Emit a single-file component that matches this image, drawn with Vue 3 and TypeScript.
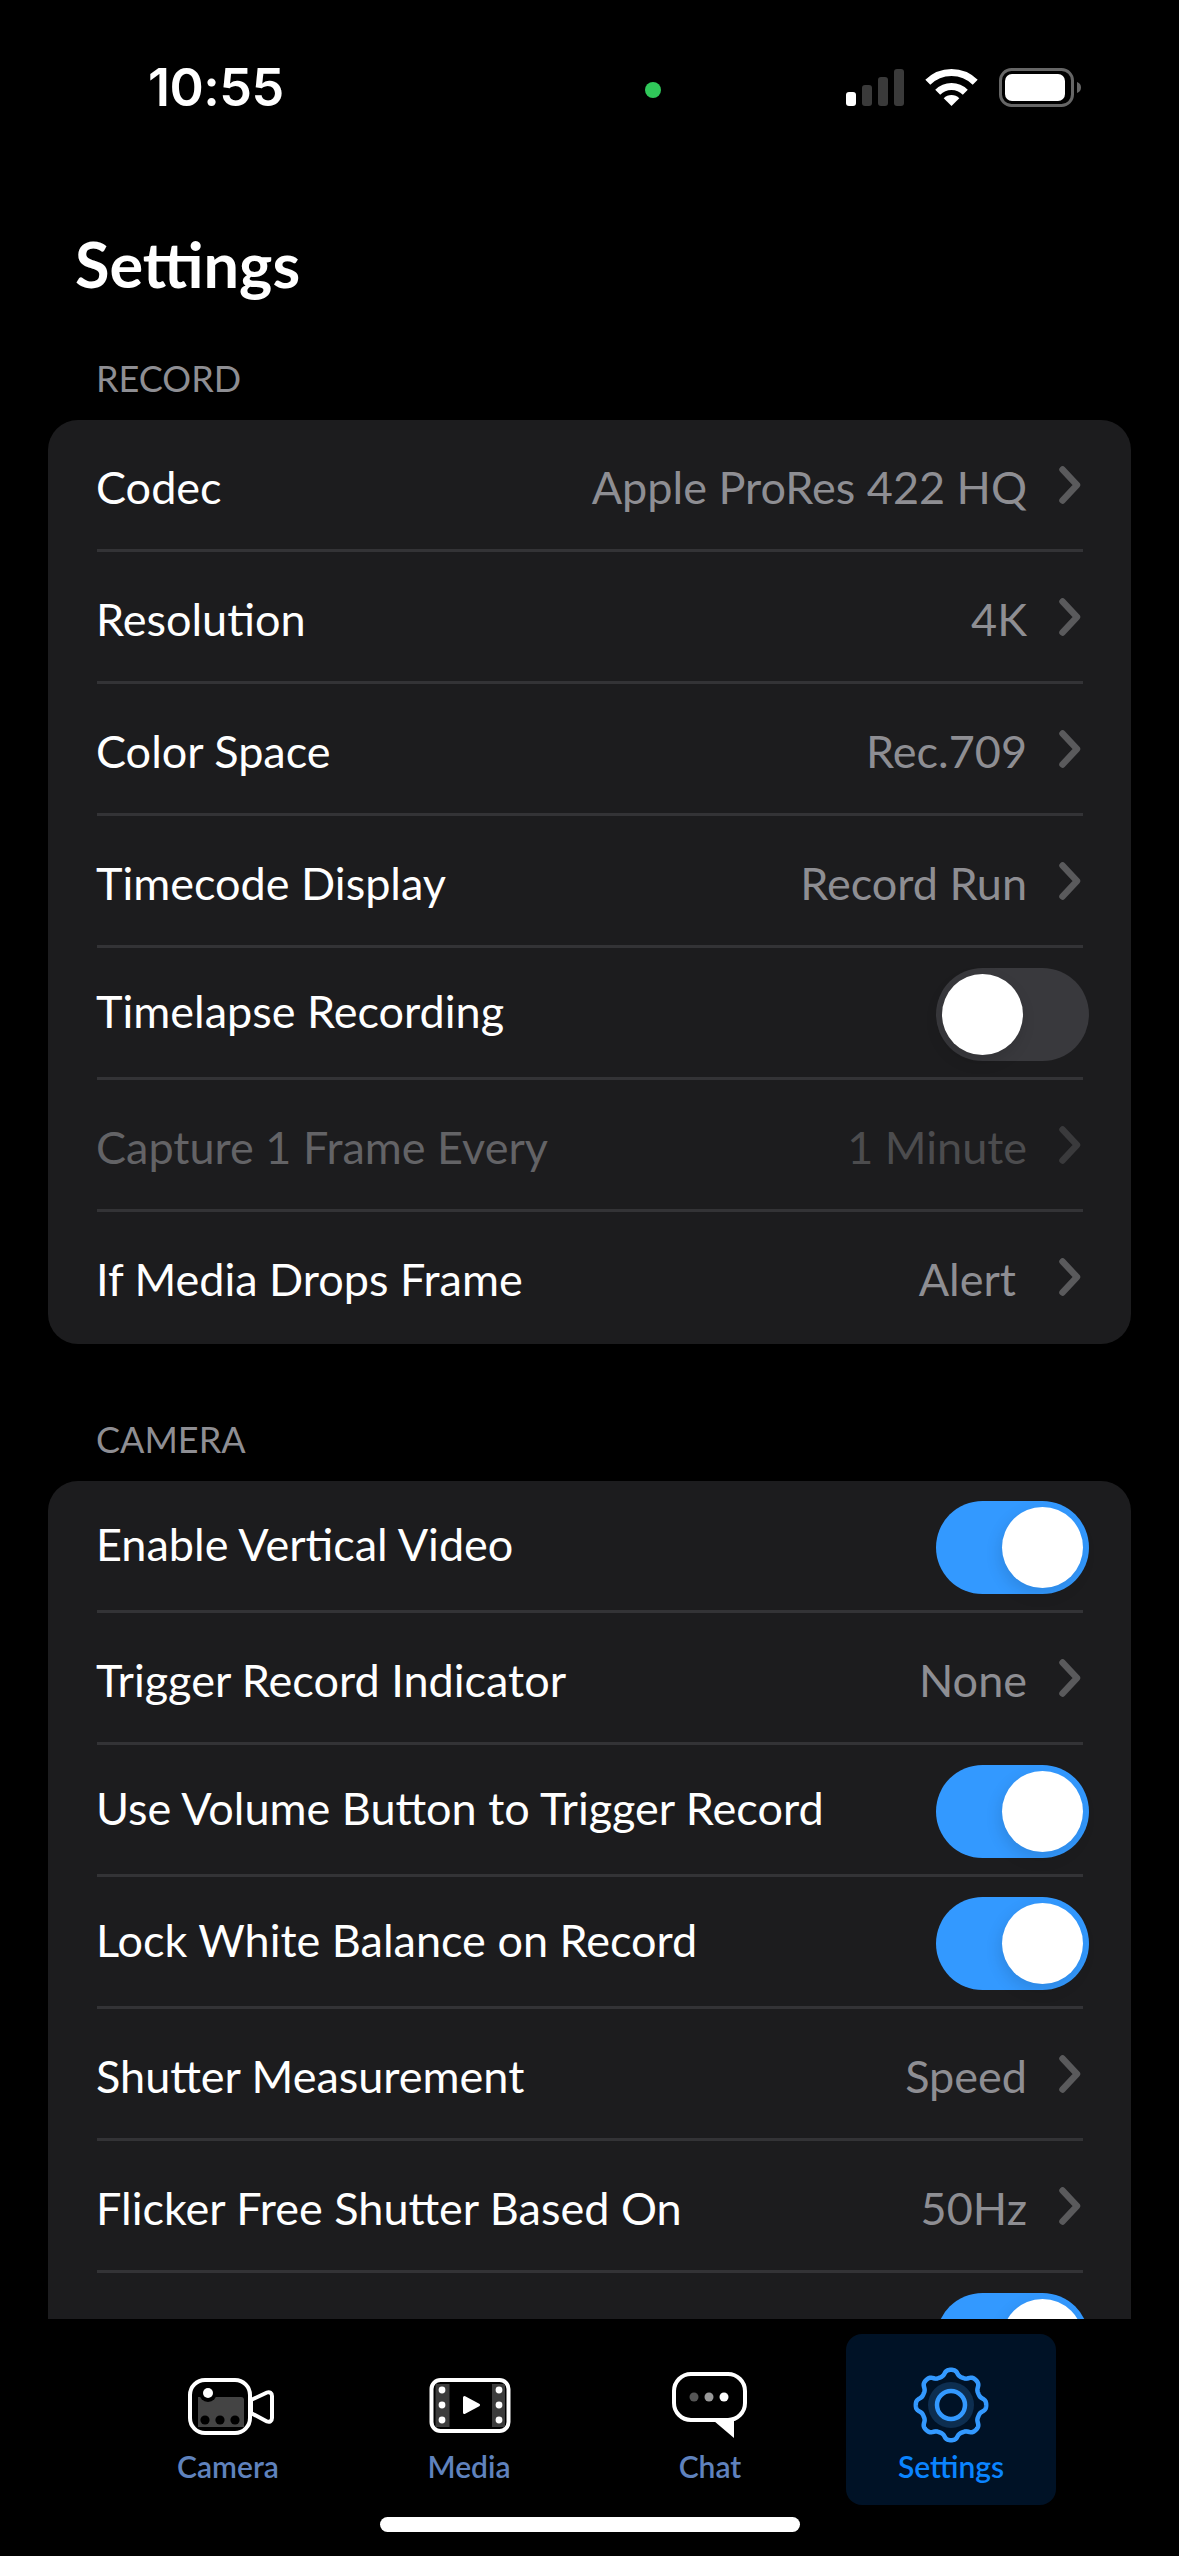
<script setup lang="ts">
interface Row {
  label: string;
  value?: string;
  toggle?: boolean;
  dim?: boolean;
  inset?: boolean;
}

const recordRows: Row[] = [
  { label: 'Codec', value: 'Apple ProRes 422 HQ' },
  { label: 'Resolution', value: '4K' },
  { label: 'Color Space', value: 'Rec.709' },
  { label: 'Timecode Display', value: 'Record Run' },
  { label: 'Timelapse Recording', toggle: false },
  { label: 'Capture 1 Frame Every', value: '1 Minute', dim: true },
  { label: 'If Media Drops Frame', value: 'Alert', inset: true },
];

const cameraRows: Row[] = [
  { label: 'Enable Vertical Video', toggle: true },
  { label: 'Trigger Record Indicator', value: 'None' },
  { label: 'Use Volume Button to Trigger Record', toggle: true },
  { label: 'Lock White Balance on Record', toggle: true },
  { label: 'Shutter Measurement', value: 'Speed' },
  { label: 'Flicker Free Shutter Based On', value: '50Hz' },
  { label: '', toggle: true },
];

const sections = [
  { title: 'RECORD', rows: recordRows },
  { title: 'CAMERA', rows: cameraRows },
];

// gear outline, 8 soft teeth
const gearPath = (() => {
  const pts: string[] = [];
  for (let i = 0; i < 240; i++) {
    const a = (i / 240) * Math.PI * 2;
    const r = 32.4 + 2.8 * (Math.tanh(1.5 * Math.cos(8 * a)) / Math.tanh(1.5));
    pts.push(`${(40 + r * Math.sin(a)).toFixed(2)} ${(40 - r * Math.cos(a)).toFixed(2)}`);
  }
  return `M${pts.join('L')}Z`;
})();
</script>

<template>
  <div class="page">
    <div class="status">
      <span class="time">10:55</span>
      <span class="dot"></span>
      <svg class="status-icons" width="235" height="40" viewBox="0 0 235 40">
        <rect x="0" y="24" width="10" height="14" rx="3" fill="#fff" />
        <rect x="16" y="17" width="10" height="21" rx="3" fill="#3a3a3a" />
        <rect x="32" y="9" width="10" height="29" rx="3" fill="#3a3a3a" />
        <rect x="48" y="1" width="10" height="37" rx="3" fill="#3a3a3a" />
        <path d="M81.8 14.3A33.5 33.5 0 0 1 129.2 14.3" fill="none" stroke="#fff" stroke-width="7" />
        <path d="M91.7 24.2A19.5 19.5 0 0 1 119.3 24.2" fill="none" stroke="#fff" stroke-width="7" />
        <path d="M105.5 38L97.7 30.2A11 11 0 0 1 113.3 30.2Z" fill="#fff" />
        <rect x="154.5" y="1.5" width="72" height="36" rx="11" fill="none" stroke="#666" stroke-width="3" />
        <rect x="159" y="6" width="60" height="27" rx="7" fill="#fff" />
        <path d="M231 14C234 15 235 17 235 19.5C235 22 234 24 231 25Z" fill="#666" />
      </svg>
    </div>

    <div class="scroll">
      <h1 class="title">Settings</h1>
      <section v-for="section in sections" :key="section.title" class="section">
        <h2 class="section-title">{{ section.title }}</h2>
        <div class="card">
          <div
            v-for="(row, index) in section.rows"
            :key="index"
            :class="['row', { dim: row.dim, 'toggle-row': row.toggle !== undefined }]"
          >
            <span class="label">{{ row.label }}</span>
            <span v-if="row.toggle !== undefined" :class="['toggle', { on: row.toggle }]">
              <span class="knob"></span>
            </span>
            <template v-else>
              <span :class="['value', { inset: row.inset }]">{{ row.value }}</span>
              <svg class="chevron" width="22" height="38" viewBox="0 0 22 38">
                <path d="M3.5 3.5L18 19L3.5 34.5" fill="none" stroke="currentColor" stroke-width="6.5" stroke-linecap="round" stroke-linejoin="round" />
              </svg>
            </template>
          </div>
        </div>
      </section>
    </div>

    <div class="tabbar">
      <nav class="tabs">
        <div class="tab">
          <svg width="96" height="72" viewBox="0 0 96 72">
            <rect x="10" y="2" width="60" height="53" rx="15" fill="#000" stroke="#fff" stroke-width="4" />
            <path d="M19 19H61A3 3 0 0 1 64 22V49H18V19Z" fill="#444" />
            <circle cx="28" cy="15" r="9" fill="#000" />
            <circle cx="28" cy="15" r="5" fill="#fff" />
            <circle cx="25" cy="42" r="4.6" fill="#000" />
            <circle cx="40" cy="42" r="4.6" fill="#000" />
            <circle cx="55" cy="42" r="4.6" fill="#000" />
            <path d="M71 22L87 14.5C89.5 13.5 92 15 92 18V40C92 43 89.5 44.5 87 43.5L71 35Z" fill="none" stroke="#fff" stroke-width="4" stroke-linejoin="round" />
          </svg>
          <span class="tab-label">Camera</span>
        </div>
        <div class="tab">
          <svg width="96" height="72" viewBox="0 0 96 72">
            <rect x="10.5" y="2" width="77" height="51" rx="9" fill="#000" stroke="#fff" stroke-width="4" />
            <rect x="14.5" y="6" width="14" height="43" fill="#3c3c3c" />
            <rect x="71" y="6" width="13" height="43" fill="#3c3c3c" />
            <circle cx="21" cy="12" r="3.4" fill="#fff" />
            <circle cx="21" cy="27" r="3.4" fill="#fff" />
            <circle cx="21" cy="42" r="3.4" fill="#fff" />
            <circle cx="78" cy="12" r="3.4" fill="#fff" />
            <circle cx="78" cy="27" r="3.4" fill="#fff" />
            <circle cx="78" cy="42" r="3.4" fill="#fff" />
            <path d="M43.5 19.5L57.5 27L43.5 34.5Z" fill="#fff" stroke="#fff" stroke-width="3" stroke-linejoin="round" />
          </svg>
          <span class="tab-label">Media</span>
        </div>
        <div class="tab">
          <svg width="96" height="72" viewBox="0 6 96 72">
            <rect x="12" y="2" width="71" height="46" rx="17" fill="#000" stroke="#fff" stroke-width="4" />
            <path d="M52 49L72 66V49Z" fill="#fff" />
            <circle cx="32" cy="25" r="4.5" fill="#555" />
            <circle cx="47" cy="25" r="4.5" fill="#999" />
            <circle cx="62" cy="25" r="4.5" fill="#fff" />
          </svg>
          <span class="tab-label">Chat</span>
        </div>
        <div class="tab active">
          <svg width="80" height="80" viewBox="0 0 80 80" class="gear">
            <path :d="gearPath" fill="none" stroke="#39f" stroke-width="4.5" stroke-linejoin="round" />
            <circle cx="40" cy="40" r="23" fill="#0d2e50" />
            <circle cx="40" cy="40" r="14" fill="#001226" stroke="#39f" stroke-width="4.5" />
          </svg>
          <span class="tab-label">Settings</span>
        </div>
      </nav>
      <div class="home"></div>
    </div>
  </div>
</template>

<style scoped>
.page {
  width: 1179px;
  height: 2556px;
  display: flex;
  flex-direction: column;
  background: #000;
  color: #fff;
  font-family: Lato, "Noto Sans", sans-serif;
  overflow: hidden;
}

.status {
  flex: none;
  height: 132px;
  padding-left: 148px;
  display: grid;
  grid-template-columns: 497px 16px 1fr;
  align-items: start;
}

.time {
  margin-top: 60px;
  font-family: Inter, sans-serif;
  font-size: 52px;
  line-height: 56px;
  font-weight: 600;
  letter-spacing: -0.5px;
}

.dot {
  margin-top: 82px;
  width: 16px;
  height: 16px;
  border-radius: 50%;
  background: #30c85a;
}

.status-icons {
  margin-top: 68px;
  justify-self: end;
  margin-right: 98px;
}

.scroll {
  flex: 1;
  min-height: 0;
  overflow: hidden;
}

.title {
  margin: 92px 0 42px 75px;
  font-size: 63px;
  line-height: 80px;
  font-weight: 700;
}

.section {
  margin-bottom: 63px;
}

.section-title {
  margin: 0;
  padding: 10px 0 0 96px;
  height: 74px;
  box-sizing: border-box;
  font-size: 36px;
  line-height: 44px;
  font-weight: 400;
  color: #8e8e93;
}

.card {
  margin: 0 48px;
  padding: 0 48px 0 49px;
  border-radius: 30px;
  background: #1c1c1e;
}

.row {
  height: 129px;
  display: flex;
  align-items: center;
  border-bottom: 3px solid #333336;
  font-size: 45px;
}

.row:last-child {
  border-bottom: none;
  padding-bottom: 3px;
}

.label {
  flex: 1;
  margin-left: -1px;
  color: #fff;
  padding-top: 4px;
}

.toggle-row .label {
  padding-top: 0;
  margin-top: -4px;
}

.value {
  color: #8e8e93;
  padding-top: 4px;
}

.value.inset {
  margin-right: 11px;
}

.chevron {
  margin-left: 32px;
  margin-right: 2px;
  color: #5a5a5c;
  flex: none;
}

.dim .label {
  color: #636366;
}

.dim .value {
  color: #4c4c4e;
}

.dim .chevron {
  color: #3a3a3c;
}

.toggle {
  flex: none;
  width: 153px;
  height: 93px;
  margin-top: 3px;
  margin-right: -6px;
  padding: 6px;
  box-sizing: border-box;
  border-radius: 47px;
  background: #39393d;
  display: flex;
}

.toggle.on {
  background: #39f;
  justify-content: flex-end;
}

.knob {
  width: 81px;
  height: 81px;
  border-radius: 50%;
  background: #fff;
  box-shadow: -2px 6px 16px rgba(0, 0, 0, 0.12);
}

.tabbar {
  flex: none;
  height: 237px;
  padding-top: 15px;
  box-sizing: border-box;
  display: flex;
  flex-direction: column;
  background: #000;
}

.tabs {
  display: flex;
  gap: 31px;
  padding-left: 123px;
}

.tab {
  width: 210px;
  height: 171px;
  display: flex;
  flex-direction: column;
  align-items: center;
  justify-content: flex-end;
  padding-bottom: 21px;
  box-sizing: border-box;
  border-radius: 16px;
}

.tab svg {
  flex: none;
  margin-bottom: -2px;
  overflow: visible;
}

.tab.active svg {
  margin-bottom: 3px;
}

.tab-label {
  font-size: 30px;
  line-height: 36px;
  font-weight: 600;
  color: #5f82bd;
}

.tab.active {
  background: #001226;
}

.tab.active .tab-label {
  color: #0a84ff;
}

.home {
  width: 420px;
  height: 15px;
  margin: 12px auto 0;
  border-radius: 8px;
  background: #fff;
}
</style>

<style>
html,
body {
  background: #000;
}
</style>
